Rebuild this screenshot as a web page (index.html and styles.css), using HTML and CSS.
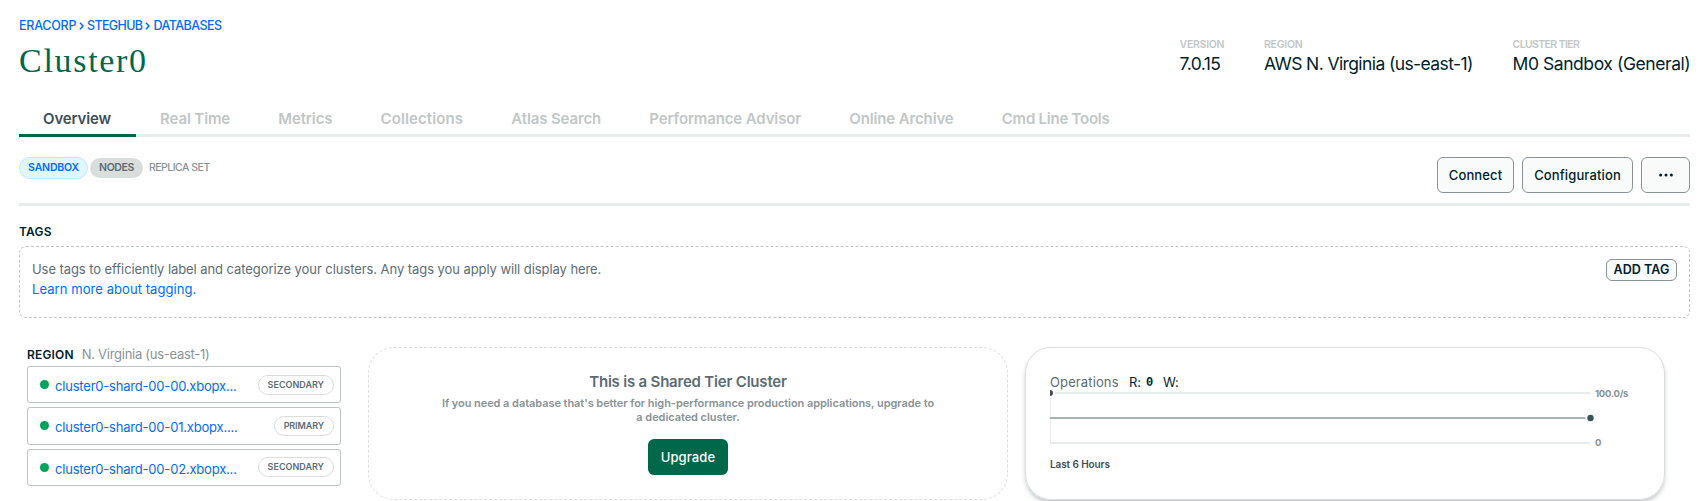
FILE: index.html
```
<!DOCTYPE html>
<html lang="en">
<head>
<meta charset="utf-8">
<title>Cluster0</title>
<link rel="stylesheet" href="styles.css">
</head>
<body>
<main class="page">
  <header class="header">
    <div class="heading">
      <nav class="crumbs">
        <a class="crumb-org">ERACORP</a>
        <svg class="chevron" viewBox="0 0 5 8"><path d="M1 .8 4 4 1 7.2"/></svg>
        <a class="crumb-project">STEGHUB</a>
        <svg class="chevron" viewBox="0 0 5 8"><path d="M1 .8 4 4 1 7.2"/></svg>
        <a class="crumb-page">DATABASES</a>
      </nav>
      <h1 class="title">Cluster0</h1>
    </div>
    <dl class="facts">
      <div class="fact fact-version"><dt>VERSION</dt><dd>7.0.15</dd></div>
      <div class="fact fact-region"><dt>REGION</dt><dd>AWS N. Virginia (us-east-1)</dd></div>
      <div class="fact fact-tier"><dt>CLUSTER TIER</dt><dd>M0 Sandbox (General)</dd></div>
    </dl>
  </header>

  <nav class="tabs">
    <a class="tab tab-active">Overview</a>
    <a class="tab">Real Time</a>
    <a class="tab">Metrics</a>
    <a class="tab tab-wide">Collections</a>
    <a class="tab">Atlas Search</a>
    <a class="tab">Performance Advisor</a>
    <a class="tab">Online Archive</a>
    <a class="tab tab-tight">Cmd Line Tools</a>
  </nav>

  <section class="toolbar">
    <div class="badges">
      <span class="badge badge-blue">SANDBOX</span>
      <span class="badge badge-gray">NODES</span>
      <span class="replica">REPLICA SET</span>
    </div>
    <div class="actions">
      <button class="button connect">Connect</button>
      <button class="button configure">Configuration</button>
      <button class="button more" aria-label="More"><svg viewBox="0 0 16 4"><circle cx="2.6" cy="2" r="1.5"/><circle cx="8" cy="2" r="1.5"/><circle cx="13.4" cy="2" r="1.5"/></svg></button>
    </div>
  </section>

  <h2 class="tags-title">TAGS</h2>
  <section class="tags">
    <div class="tags-text">
      <p>Use tags to efficiently label and categorize your clusters. Any tags you apply will display here.</p>
      <a class="tags-link">Learn more about tagging.</a>
    </div>
    <button class="add-tag">ADD TAG</button>
  </section>

  <div class="panels">
    <section class="region">
      <h3 class="region-title"><b>REGION</b><span>N. Virginia (us-east-1)</span></h3>
      <ul class="nodes">
        <li class="node"><i class="dot"></i><a class="node-name">cluster0-shard-00-00.xbopx...</a><span class="role">SECONDARY</span></li>
        <li class="node"><i class="dot"></i><a class="node-name">cluster0-shard-00-01.xbopx....</a><span class="role role-primary">PRIMARY</span></li>
        <li class="node"><i class="dot"></i><a class="node-name">cluster0-shard-00-02.xbopx...</a><span class="role">SECONDARY</span></li>
      </ul>
    </section>

    <section class="upsell">
      <h3>This is a Shared Tier Cluster</h3>
      <p>If you need a database that's better for high-performance production applications, upgrade to<br>a dedicated cluster.</p>
      <button class="upgrade">Upgrade</button>
    </section>

    <section class="metrics">
      <div class="legend"><span class="legend-name">Operations</span><span class="legend-item">R:</span><b>0</b><span class="legend-item legend-write">W:</span></div>
      <div class="chart-row">
        <svg class="chart" viewBox="0 0 545 56">
          <path class="grid" d="M5 4h535M0 54h540"/>
          <path class="axis" d="M.5 9v46"/>
          <path class="series" d="M0 29h535.5"/>
          <circle class="point" cx="0" cy="4" r="3"/>
          <circle class="point" cx="540.5" cy="29" r="3.2"/>
        </svg>
        <div class="scale"><span>100.0/s</span><span>0</span></div>
      </div>
      <div class="period">Last 6 Hours</div>
    </section>
  </div>
</main>
</body>
</html>
```
FILE: styles.css
```
* { box-sizing: border-box; margin: 0; padding: 0; }
body {
  width: 1705px;
  height: 501px;
  overflow: hidden;
  background: #fff;
  color: #001e2b;
  font-family: Inter, "Liberation Sans", sans-serif;
  white-space: nowrap;
}
button { font-family: inherit; color: inherit; }
.page { padding: 16px 15px 0 19px; }

.header { display: flex; justify-content: space-between; height: 86px; }
.crumbs { display: flex; align-items: center; height: 18px; font-size: 12.5px; font-weight: 500; color: #016bf8; }
.crumb-org { width: 59.5px; letter-spacing: -.25px; }
.crumbs .crumb-project { width: 58px; margin-left: 3.5px; letter-spacing: -.66px; }
.crumb-page { letter-spacing: -.55px; }
.chevron { width: 5px; height: 8px; margin-top: 1px; fill: none; stroke: #016bf8; stroke-width: 1.5; }
.chevron + a { margin-left: 3.5px; }
.title {
  margin-top: 7px;
  font: 400 34px/40px "Liberation Serif", serif;
  letter-spacing: 1.7px;
  color: #00684a;
}
.facts { display: flex; padding-top: 20px; }
.fact dt { height: 17px; font-size: 10.5px; line-height: 17px; font-weight: 600; color: #c1c7c6; letter-spacing: -.26px; }
.fact dd { font-size: 17.5px; line-height: 22px; }
.fact-version { width: 84.5px; }
.fact-version dd { letter-spacing: -.57px; }
.fact-region { width: 248.5px; }
.fact-region dd { letter-spacing: -.6px; }
.fact-tier { width: 177.5px; }
.fact-tier dt { letter-spacing: -.61px; }
.fact-tier dd { letter-spacing: -.43px; }

.tabs { display: flex; height: 35px; border-bottom: 3px solid #e8edeb; }
.tab { height: 35px; padding: 7px 24.1px 0; font-size: 15px; line-height: 20px; font-weight: 600; letter-spacing: -.13px; color: #c1c7c6; }
.tab-active { width: 117px; padding-left: 24px; color: #3d4f58; border-bottom: 3px solid #00684a; }
.tab-wide { letter-spacing: .1px; }
.tab-tight { letter-spacing: -.24px; }

.toolbar { display: flex; justify-content: space-between; height: 69px; padding-top: 20px; border-bottom: 3px solid #e8edeb; }
.badges { display: flex; align-items: center; height: 22px; gap: 2px; font-size: 10.5px; line-height: 12px; }
.badge { display: flex; align-items: center; justify-content: center; padding-bottom: 1px; font-weight: 600; border-radius: 11px; }
.badge-blue { width: 69px; height: 22px; color: #016bf8; background: #e1f7ff; border: 1px solid #c3e7fe; letter-spacing: -.17px; }
.badge-gray { width: 53px; height: 20px; color: #5c6c75; background: #d9dddc; letter-spacing: -.4px; }
.replica { margin-left: 4px; padding-bottom: 1px; font-weight: 500; color: #889397; letter-spacing: -.51px; }
.actions { display: flex; gap: 8px; }
.button { height: 36px; border: 1px solid #889397; border-radius: 6px; background: #f9fbfa; font-size: 13px; font-weight: 500; letter-spacing: .13px; }
.connect { width: 77px; }
.configure { width: 111px; }
.more { display: flex; align-items: center; justify-content: center; width: 49px; }
.more svg { width: 16px; height: 4px; fill: #001e2b; margin-bottom: 1px; }

.tags-title { margin-top: 17px; height: 23px; font-size: 12px; line-height: 18px; font-weight: 600; letter-spacing: .2px; }
.tags { display: flex; justify-content: space-between; height: 72px; padding: 12px 12px 0; border: 1px dashed #c1c7c6; border-radius: 7px; font-size: 13px; line-height: 20px; color: #5c6c75; }
.tags p { letter-spacing: -.07px; }
.tags-link { color: #016bf8; letter-spacing: .07px; }
.add-tag { width: 71px; height: 22px; border: 1px solid #889397; border-radius: 6px; background: #f9fbfa; color: #001e2b; font-size: 12.5px; font-weight: 600; letter-spacing: .05px; line-height: 19px; padding-bottom: 1px; }

.panels { display: flex; align-items: flex-start; padding: 29px 0 0 8px; }
.region { width: 314px; }
.region-title { display: flex; align-items: center; height: 15px; margin-bottom: 4px; gap: 8px; font-size: 13px; line-height: 15px; font-weight: 400; color: #889397; letter-spacing: -.28px; }
.region-title b { font-size: 12px; font-weight: 600; letter-spacing: .17px; color: #001e2b; }
.nodes { display: flex; flex-direction: column; gap: 4px; list-style: none; }
.node { display: flex; align-items: center; height: 37.3px; padding: 0 6px 0 12px; border: 1px solid #b8c4c2; border-radius: 3px; }
.dot { width: 9px; height: 9px; margin-right: 6px; border-radius: 50%; background: #00a35c; }
.node-name { flex: 1; padding-top: 3px; font-size: 13px; line-height: 16px; letter-spacing: -.2px; color: #016bf8; }
.role { height: 20px; padding: 0 9px; border: 1px solid #d9dddc; border-radius: 10px; font-size: 9px; line-height: 18px; font-weight: 600; color: #5c6c75; }
.role-primary { letter-spacing: -.1px; }

.upsell { width: 640px; height: 153px; margin-left: 27px; padding-top: 23px; border: 1px dashed #dcdfde; border-radius: 26px; text-align: center; }
.upsell h3 { font-size: 15px; line-height: 22px; font-weight: 600; letter-spacing: -.2px; color: #5c6c75; }
.upsell p { margin-top: 3px; font-size: 11px; line-height: 14px; font-weight: 600; letter-spacing: -.06px; color: #889397; }
.upgrade { width: 80px; height: 36px; margin-top: 15px; border: 0; border-radius: 6px; background: #00684a; color: #fff; font-size: 13px; font-weight: 500; letter-spacing: .1px; }

.metrics { width: 640px; height: 153px; margin-left: 17px; padding: 26px 0 0 24px; border: 1px solid #d9dddc; border-radius: 26px; box-shadow: 0 3px 5px -1px rgba(0, 30, 43, .3); }
.legend { display: flex; height: 15px; font-size: 13px; line-height: 17px; font-weight: 400; }
.legend-name { width: 79px; color: #5c6c75; letter-spacing: .12px; }
.legend-item { width: 17px; letter-spacing: -.2px; }
.legend b { width: 17px; font: 700 12px/18px "Liberation Mono", monospace; }
.chart-row { display: flex; height: 56px; }
.chart { width: 545px; height: 56px; fill: none; }
.grid { stroke: #e8edeb; stroke-width: 2; }
.axis { stroke: #e8edeb; stroke-width: 1; }
.series { stroke: #a9b3b3; stroke-width: 2; }
.point { fill: #3d4f58; }
.scale { display: flex; flex-direction: column; justify-content: space-between; height: 62px; margin-top: -2px; font-size: 9.5px; line-height: 13px; font-weight: 700; letter-spacing: -.25px; color: #889397; }
.period { margin-top: 12px; font-size: 10px; line-height: 14px; font-weight: 600; letter-spacing: -.1px; color: #3d4f58; }
```
